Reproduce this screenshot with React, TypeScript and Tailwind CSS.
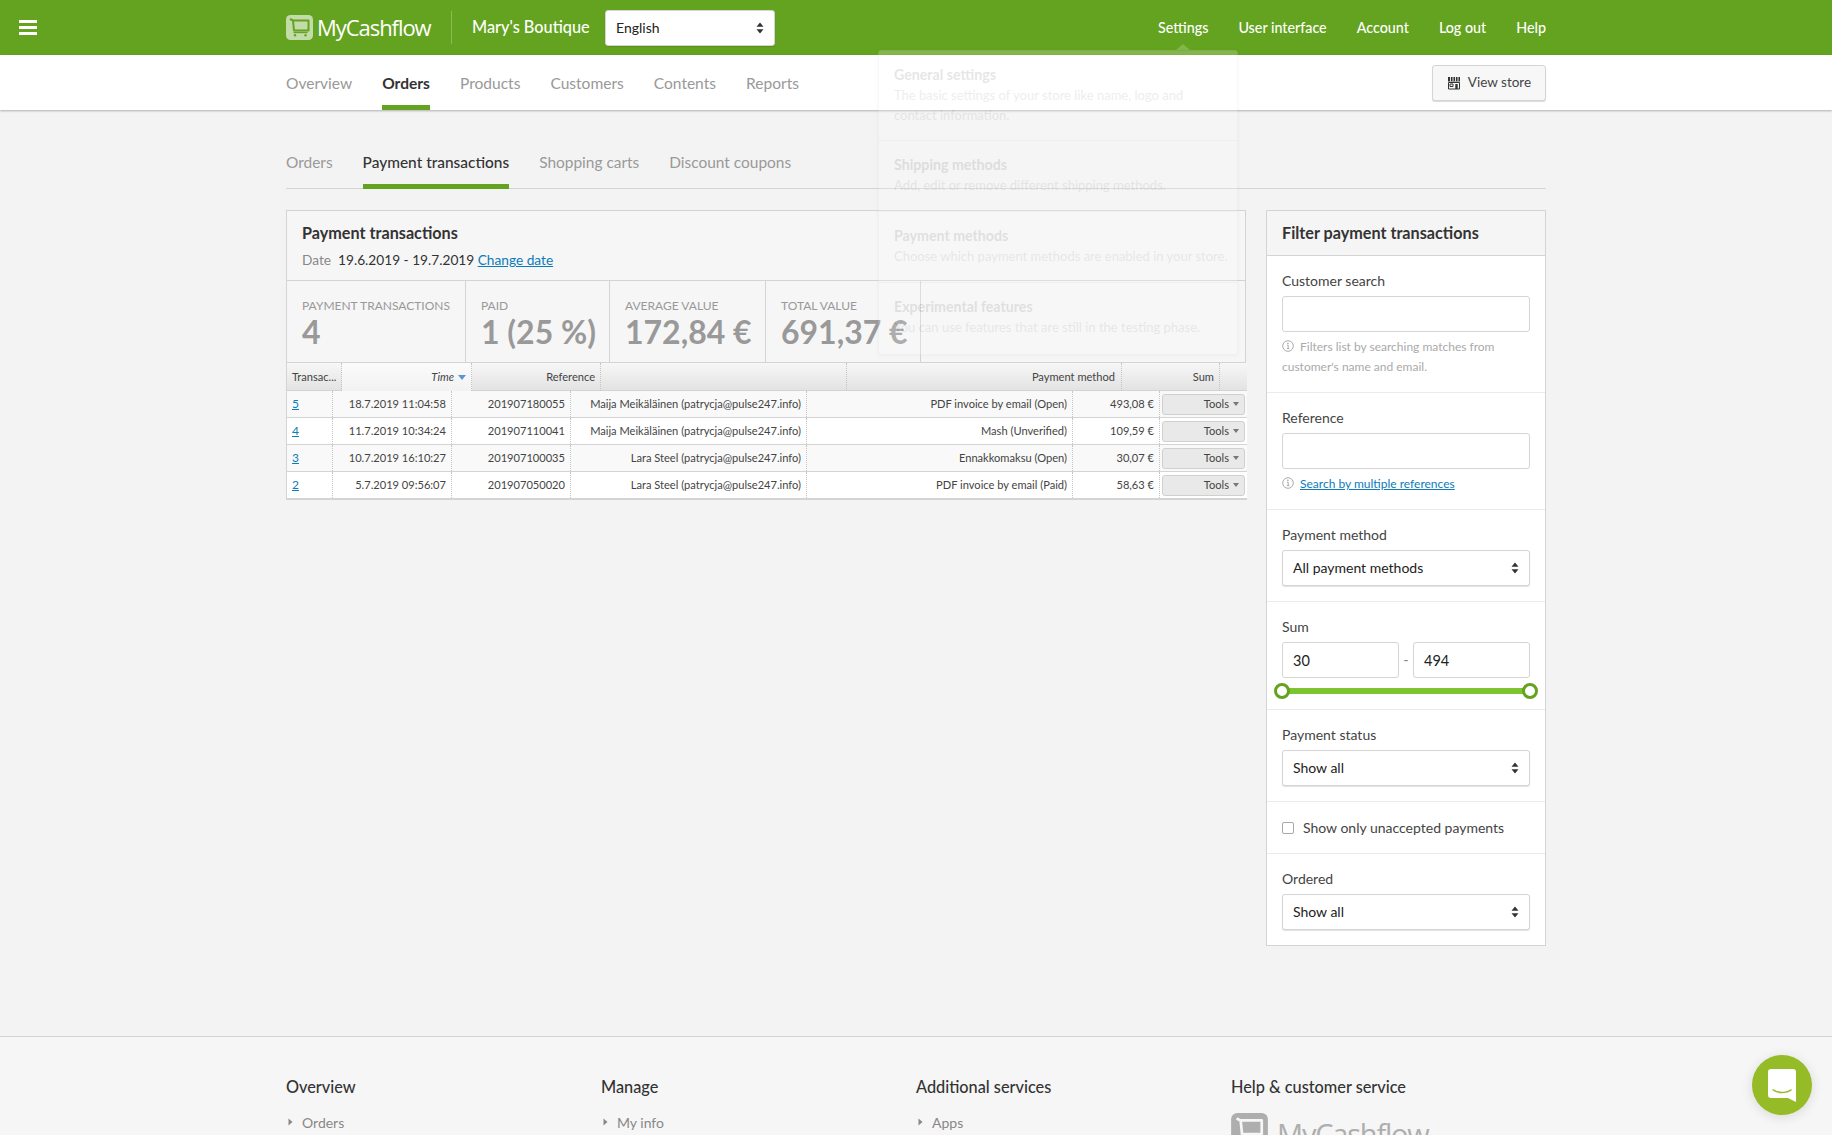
import React from "react";

const Stepper = () => (
  <svg width="8" height="12" viewBox="0 0 8 12" className="shrink-0">
    <path d="M4 0.5 L7.5 4.8 H0.5 Z M4 11.5 L7.5 7.2 H0.5 Z" fill="#333" />
  </svg>
);

const Info = () => (
  <svg width="12" height="12" viewBox="0 0 12 12" className="inline-block shrink-0 align-[-1px]">
    <circle cx="6" cy="6" r="5.3" fill="none" stroke="#aaa" strokeWidth="1" />
    <path d="M5 5.2h1.2v3.2M4.8 8.6h2.6" fill="none" stroke="#aaa" strokeWidth="1" />
    <circle cx="5.9" cy="3.4" r="0.8" fill="#aaa" />
  </svg>
);

const Logo = ({ w, h, bg, fg }: { w: number; h: number; bg: string; fg: string }) => (
  <svg width={w} height={h} viewBox="0 0 27 25" className="shrink-0">
    <rect x="0" y="0" width="27" height="25" rx="4.5" fill={bg} />
    <path d="M4 4 L7 5.5 H22.5 V15.5 H8 L7 5.5" fill="none" stroke={fg} strokeWidth="2" strokeLinejoin="round" />
    <path d="M7.5 17.5 H21.5" stroke={fg} strokeWidth="1.4" />
    <circle cx="9" cy="20.3" r="1.2" fill={fg} />
    <circle cx="19.5" cy="20.3" r="1.2" fill={fg} />
  </svg>
);

const Select = ({ label, className }: { label: string; className: string }) => (
  <div className={"flex items-center justify-between rounded-[3px] border border-[#d4d4d4] bg-white text-[14px] text-[#222] shadow-[0_1px_1px_rgba(0,0,0,0.12)] " + className}>
    <span className="-mt-[1px]">{label}</span>
    <Stepper />
  </div>
);

const Field = ({ label, children, className }: { label: string; children: React.ReactNode; className: string }) => (
  <div className={"border-b border-[#ebebeb] px-[15px] " + className}>
    <div className="mb-[5px] h-[20px] text-[14px] leading-[20px] text-[#444]">{label}</div>
    {children}
  </div>
);

const Stat = ({ label, value, className }: { label: string; value: string; className: string }) => (
  <div className={"border-r border-[#d4d4d4] pl-[15px] pt-[15px] " + className}>
    <div className="h-[20px] text-[12px] leading-[20px] text-[#999]">{label}</div>
    <div className="text-[32px] font-bold leading-[32px] text-[#999]">{value}</div>
  </div>
);

const rows = [
  ["5", "18.7.2019 11:04:58", "201907180055", "Maija Meikäläinen (patrycja@pulse247.info)", "PDF invoice by email (Open)", "493,08 €"],
  ["4", "11.7.2019 10:34:24", "201907110041", "Maija Meikäläinen (patrycja@pulse247.info)", "Mash (Unverified)", "109,59 €"],
  ["3", "10.7.2019 16:10:27", "201907100035", "Lara Steel (patrycja@pulse247.info)", "Ennakkomaksu (Open)", "30,07 €"],
  ["2", "5.7.2019 09:56:07", "201907050020", "Lara Steel (patrycja@pulse247.info)", "PDF invoice by email (Paid)", "58,63 €"],
];

const dropItems = [
  ["General settings", "The basic settings of your store like name, logo and contact information.", "h-[90px]"],
  ["Shipping methods", "Add, edit or remove different shipping methods.", "h-[71px]"],
  ["Payment methods", "Choose which payment methods are enabled in your store.", "h-[71px]"],
  ["Experimental features", "You can use features that are still in the testing phase.", "h-[71px]"],
];

const Footer = ({ title, link, className }: { title: string; link: string; className: string }) => (
  <div className={className}>
    <div className="h-[24px] text-[16.3px] font-medium leading-[24px] text-[#333]">{title}</div>
    <div className="mt-[11px] flex h-[24px] items-center text-[14px] text-[#888]">
      <svg width="5" height="8" viewBox="0 0 5 8" className="ml-[2px] mr-[9px]"><path d="M0.5 0.5 L4.5 4 L0.5 7.5 Z" fill="#888" /></svg>
      {link}
    </div>
  </div>
);

export default function App() {
  return (
    <div className="relative h-[1135px] overflow-hidden bg-[#f3f3f3] font-['Lato','Liberation_Sans',sans-serif]">
      <header className="flex h-[55px] items-center bg-[#64a31f] pl-[19px] pr-[286px] text-white">
        <div className="flex w-[18px] flex-col gap-[3px]">
          <span className="h-[3px] bg-white" />
          <span className="h-[3px] bg-white" />
          <span className="h-[3px] bg-white" />
        </div>
        <div className="ml-[249px] flex w-[146px] items-center">
          <Logo w={27} h={25} bg="#c3dba9" fg="#64a31f" />
          <span className="ml-[4px] font-['Open_Sans',sans-serif] text-[22px] tracking-[-1.05px]">MyCashflow</span>
        </div>
        <div className="ml-[19px] h-[33px] w-px bg-white/25" />
        <div className="ml-[20px] w-[118px] whitespace-nowrap text-[16.3px] font-medium">Mary's Boutique</div>
        <Select label="English" className="ml-[15px] h-[36px] w-[170px] pl-[10px] pr-[10px]" />
        <nav className="ml-auto flex gap-[30px] text-[14.3px] font-medium">
          <span>Settings</span>
          <span>User interface</span>
          <span>Account</span>
          <span>Log out</span>
          <span>Help</span>
        </nav>
      </header>

      <div className="relative flex h-[55px] items-center justify-between bg-white pl-[286px] pr-[286px] shadow-[0_1px_2px_rgba(0,0,0,0.28)]">
        <nav className="flex h-full gap-[30px] text-[15.55px] text-[#999]">
          <span className="flex items-center pt-[2px]">Overview</span>
          <span className="flex items-center border-b-[5px] border-[#64a31f] pt-[7px] font-bold text-[#333]">Orders</span>
          <span className="flex items-center pt-[2px]">Products</span>
          <span className="flex items-center pt-[2px]">Customers</span>
          <span className="flex items-center pt-[2px]">Contents</span>
          <span className="flex items-center pt-[2px]">Reports</span>
        </nav>
        <button className="flex h-[36px] w-[114px] items-center justify-center gap-[7px] rounded-[3px] border border-[#d4d4d4] bg-[#f7f7f7] text-[13.5px] text-[#444] shadow-[0_1px_1px_rgba(0,0,0,0.15)]">
          <svg width="14" height="14" viewBox="0 0 14 14">
            <path d="M1 1h12v4.5H1z" fill="#333" />
            <path d="M3.5 1v4.5M6 1v4.5M8.5 1v4.5M11 1v4.5" stroke="#f7f7f7" strokeWidth="0.9" />
            <path d="M1.5 6.5h11V13h-11z" fill="none" stroke="#333" strokeWidth="1" />
            <path d="M3 8h3v2.5H3z" fill="none" stroke="#333" strokeWidth="1" />
            <path d="M8.3 8h2.4v5H8.3z" fill="#333" />
          </svg>
          View store
        </button>
      </div>

      <main className="px-[286px] pb-[90px] pt-[40px]">
        <nav className="flex h-[39px] gap-[30px] border-b border-[#d4d4d4] text-[15.45px] text-[#999]">
          <span className="leading-[24px]">Orders</span>
          <span className="-mb-px border-b-[5px] border-[#64a31f] font-medium leading-[24px] text-[#333]">Payment transactions</span>
          <span className="leading-[24px]">Shopping carts</span>
          <span className="leading-[24px]">Discount coupons</span>
        </nav>

        <div className="mt-[21px] flex items-start justify-between">
          <section className="w-[960px] text-[#444]">
            <div className="border border-[#d4d4d4] bg-[#f6f6f6]">
              <div className="h-[70px] border-b border-[#d4d4d4] px-[15px] pt-[10px]">
                <h2 className="h-[24px] text-[16.2px] font-bold leading-[24px] text-[#333]">Payment transactions</h2>
                <div className="mt-[3px] text-[13.7px] leading-[24px] text-[#333]">
                  <span className="mr-[7px] text-[#888]">Date</span>19.6.2019 - 19.7.2019 <a className="text-[#0a7cbb] underline">Change date</a>
                </div>
              </div>
              <div className="flex h-[81px]">
                <Stat label="PAYMENT TRANSACTIONS" value="4" className="w-[179px]" />
                <Stat label="PAID" value="1 (25 %)" className="w-[144px]" />
                <Stat label="AVERAGE VALUE" value="172,84 €" className="w-[156px]" />
                <Stat label="TOTAL VALUE" value="691,37 €" className="w-[155px]" />
              </div>
            </div>

            <div className="w-[961px] border-l border-[#d4d4d4] text-[11.1px] text-[#444]">
              <div className="grid h-[28px] grid-cols-[55px_130px_129px_246px_275px_98px_27px] border-b border-[#d4d4d4] bg-gradient-to-b from-[#f7f7f7] to-[#e3e3e3] leading-[28px]">
                <div className="truncate border-r border-dotted border-[#c4c4c4] pl-[5px] pr-[2px]">Transac...</div>
                <div className="flex items-center justify-end gap-[4px] border-r border-dotted border-[#c4c4c4] bg-[#f7f7f7] bg-gradient-to-b from-[#fbfbfb] to-[#f2f2f2] pr-[5px] italic">
                  Time
                  <svg width="8" height="5" viewBox="0 0 8 5"><path d="M0 0h8L4 5z" fill="#5b95d6" /></svg>
                </div>
                <div className="border-r border-dotted border-[#c4c4c4] pr-[5px] text-right">Reference</div>
                <div className="border-r border-dotted border-[#c4c4c4]" />
                <div className="border-r border-dotted border-[#c4c4c4] pr-[6px] text-right">Payment method</div>
                <div className="border-r border-dotted border-[#c4c4c4] pr-[5px] text-right">Sum</div>
                <div />
              </div>
              {rows.map((r, i) => (
                <div key={r[0]} className={"grid h-[27px] grid-cols-[46px_119px_119px_236px_266px_87px_86px] border-b border-[#d4d4d4] leading-[26px] " + (i % 2 === 0 ? "bg-[#f9f9f9]" : "bg-white")}>
                  <div className="border-r border-dotted border-[#c4c4c4] pl-[5px] text-[12px]">
                    <a className="text-[#0a7cbb] underline">{r[0]}</a>
                  </div>
                  {r.slice(1).map((c) => (
                    <div key={c} className="truncate border-r border-dotted border-[#c4c4c4] pr-[5px] text-right">{c}</div>
                  ))}
                  <div className="flex items-center pl-[2px]">
                    <div className="flex h-[21px] w-[83px] items-center justify-end gap-[4px] rounded-[3px] border border-[#d0d0d0] bg-[#e9e9e9] pr-[5px]">
                      Tools
                      <svg width="6" height="4" viewBox="0 0 6 4"><path d="M0 0h6L3 4z" fill="#777" /></svg>
                    </div>
                  </div>
                </div>
              ))}
              <div className="h-px bg-[#d4d4d4]" />
            </div>
          </section>

          <aside className="w-[280px] border border-[#d4d4d4] bg-white">
            <h2 className="h-[45px] border-b border-[#d4d4d4] bg-[#f5f5f5] px-[15px] text-[16.2px] font-bold leading-[44px] text-[#333]">Filter payment transactions</h2>
            <Field label="Customer search" className="h-[137px] pt-[15px]">
              <input readOnly className="block h-[36px] w-full rounded-[3px] border border-[#d4d4d4] bg-white" />
              <p className="mt-[5px] text-[12px] leading-[20px] text-[#aaa]">
                <Info /><span className="ml-[6px]">Filters list by searching matches from customer's name and email.</span>
              </p>
            </Field>
            <Field label="Reference" className="h-[117px] pt-[15px]">
              <input readOnly className="block h-[36px] w-full rounded-[3px] border border-[#d4d4d4] bg-white" />
              <p className="mt-[5px] text-[12px] leading-[20px] text-[#aaa]">
                <Info /><a className="ml-[6px] text-[#0a7cbb] underline">Search by multiple references</a>
              </p>
            </Field>
            <Field label="Payment method" className="h-[92px] pt-[15px]">
              <Select label="All payment methods" className="h-[36px] w-full pl-[10px] pr-[10px]" />
            </Field>
            <Field label="Sum" className="h-[108px] pt-[15px]">
              <div className="flex items-center justify-between text-[14.5px] text-[#222]">
                <input readOnly value="30" className="h-[36px] w-[117px] rounded-[3px] border border-[#d4d4d4] bg-white pl-[10px]" />
                <span className="text-[#888]">-</span>
                <input readOnly value="494" className="h-[36px] w-[117px] rounded-[3px] border border-[#d4d4d4] bg-white pl-[10px]" />
              </div>
              <div className="relative mt-[10px] h-[6px] rounded-full bg-[#7cc530]">
                <span className="absolute -left-[8px] -top-[5px] h-[16px] w-[16px] rounded-full border-[3px] border-[#64a31f] bg-white" />
                <span className="absolute -right-[8px] -top-[5px] h-[16px] w-[16px] rounded-full border-[3px] border-[#64a31f] bg-white" />
              </div>
            </Field>
            <Field label="Payment status" className="h-[92px] pt-[15px]">
              <Select label="Show all" className="h-[36px] w-full pl-[10px] pr-[10px]" />
            </Field>
            <div className="flex h-[52px] items-center gap-[9px] border-b border-[#ebebeb] px-[15px] text-[14px] text-[#444]">
              <input type="checkbox" readOnly className="h-[12px] w-[12px] appearance-none rounded-[2px] border border-[#aaa] bg-white" />
              Show only unaccepted payments
            </div>
            <div className="h-[91px] px-[15px] pt-[15px]">
              <div className="mb-[5px] h-[20px] text-[14px] leading-[20px] text-[#444]">Ordered</div>
              <Select label="Show all" className="h-[36px] w-full pl-[10px] pr-[10px]" />
            </div>
          </aside>
        </div>
      </main>

      <footer className="flex border-t border-[#d4d4d4] bg-[#f6f6f6] pl-[286px] pt-[38px]">
        <Footer title="Overview" link="Orders" className="w-[315px]" />
        <Footer title="Manage" link="My info" className="w-[315px]" />
        <Footer title="Additional services" link="Apps" className="w-[315px]" />
        <div>
          <div className="h-[24px] text-[16.3px] font-medium leading-[24px] text-[#333]">Help &amp; customer service</div>
          <div className="mt-[14px] flex items-start">
            <Logo w={37} h={34} bg="#aeaeae" fg="#f6f6f6" />
            <span className="ml-[9px] font-['Open_Sans',sans-serif] text-[29px] leading-[42px] tracking-[-1.2px] text-[#aeaeae]">MyCashflow</span>
          </div>
        </div>
      </footer>

      {/* fading settings menu */}
      <div className="absolute left-[878px] top-[50px] w-[360px] rounded-[3px] border border-[#dddddd] bg-white opacity-[0.2] shadow-[0_1px_3px_rgba(0,0,0,0.15)]">
        {dropItems.map(([t, d, h], i) => (
          <div key={t} className={h + " pl-[15px] pr-[8px] pt-[12px] " + (i < 3 ? "border-b border-[#dddddd]" : "")}>
            <div className="h-[24px] text-[14.2px] font-bold leading-[24px] text-[#888]">{t}</div>
            <div className="-mt-[2px] text-[13px] leading-[20px] text-[#aaa]">{d}</div>
          </div>
        ))}
      </div>
      <div className="absolute left-[1176px] top-[44px] h-0 w-0 border-x-[7px] border-b-[6px] border-x-transparent border-b-white/20" />

      <div className="absolute left-[1752px] top-[1055px] flex h-[60px] w-[60px] items-center justify-center rounded-full bg-[#95bb26] shadow-[0_2px_12px_rgba(0,0,0,0.12)]">
        <svg width="28" height="33" viewBox="0 0 28 33">
          <path d="M3 0H25a3 3 0 0 1 3 3V33L20 29H3a3 3 0 0 1-3-3V3a3 3 0 0 1 3-3z" fill="#fff" />
          <path d="M4.5 20.5c5 4 14 4 19 0" fill="none" stroke="#95bb26" strokeWidth="1.6" />
        </svg>
      </div>
    </div>
  );
}
